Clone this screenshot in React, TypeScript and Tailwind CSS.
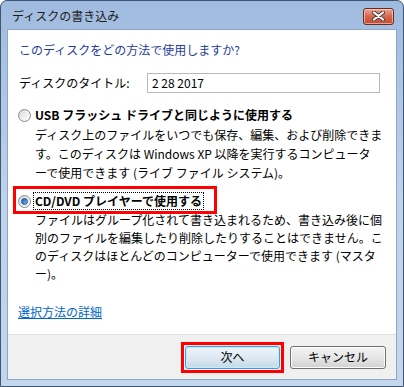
import React from 'react';

const font = "font-['Noto_Sans_CJK_JP','Noto_Sans',sans-serif]";

const Radio: React.FC<{ checked?: boolean }> = ({ checked }) => (
  <div className="w-[13px] h-[13px] shrink-0 rounded-full border border-[#8a8a8a] bg-linear-to-br from-[#d4d4d4] via-[#eeeeee] to-[#ffffff] flex items-center justify-center">
    {checked && (
      <div className="w-[7px] h-[7px] rounded-full border border-[#1b4f8c] bg-linear-to-br from-[#1d5ea8] via-[#3d8ee0] to-[#8ccaf5]" />
    )}
  </div>
);

const CloseButton: React.FC = () => (
  <div className="w-[31px] h-[17px] rounded-[3px] border border-[#6b2a1e] bg-linear-to-b from-[#e8a597] via-[#d4664f] to-[#c44a32] flex items-center justify-center shadow-[inset_0_0_0_1px_rgba(255,220,210,0.6)]">
    <svg width="13" height="10" viewBox="0 0 13 10">
      <path d="M2 1.5 L11 8.5 M11 1.5 L2 8.5" stroke="#4a3a36" strokeWidth="4" strokeLinecap="round" />
      <path d="M2 1.5 L11 8.5 M11 1.5 L2 8.5" stroke="#ffffff" strokeWidth="2.2" strokeLinecap="round" />
    </svg>
  </div>
);

export default function App() {
  return (
    <div className={`w-[404px] h-[387px] bg-white ${font} text-[12px] text-black`}>
      <div className="w-full h-full rounded-t-[7px] border border-[#3f5571] bg-linear-to-b from-[#9fbbdf] via-[#bdd2eb] to-[#c2d6ed] flex flex-col">
        {/* title bar */}
        <div className="h-[28px] shrink-0 flex items-center justify-between pl-[11px] pr-[9px] pt-[2px]">
          <span className="text-[12px] text-[#1b1b1b] leading-[16px]">ディスクの書き込み</span>
          <CloseButton />
        </div>

        {/* body */}
        <div className="flex-1 mx-[6px] mb-[6px] border border-[#8fa7c3] flex flex-col">
          <div className="flex-1 bg-white flex flex-col">
            <p className="pt-[11px] pl-[11px] leading-[18px] text-[#1e3c9a]">このディスクをどの方法で使用しますか?</p>

            <div className="mt-[14px] pl-[11px] h-[20px] flex items-center">
              <span className="w-[128px] leading-[18px]">ディスクのタイトル:</span>
              <div className="w-[233px] h-[20px] border border-[#b5b8be] flex items-center px-[4px] leading-[18px]">2 28 2017</div>
            </div>

            <div className="mt-[13px] pl-[10px] h-[18px] flex items-center gap-[2px]">
              <Radio />
              <span className="border border-transparent px-[1px] font-bold leading-[16px]">USB フラッシュ ドライブと同じように使用する</span>
            </div>
            <div className="mt-[1px] pl-[27px] leading-[19px] whitespace-nowrap">
              <div>ディスク上のファイルをいつでも保存、編集、および削除できま</div>
              <div>す。このディスクは Windows XP 以降を実行するコンピュータ</div>
              <div>ーで使用できます (ライブ ファイル システム)。</div>
            </div>

            <div className="mt-[10px] pl-[10px] h-[18px] flex items-center gap-[2px] relative">
              <div className="absolute left-[5px] -top-[6px] w-[204px] h-[28px] border-[3px] border-[#ff0000]" />
              <Radio checked />
              <span className="border border-dotted border-black px-[1px] font-bold leading-[16px]">CD/DVD プレイヤーで使用する</span>
            </div>
            <div className="mt-[1px] pl-[27px] leading-[18px] whitespace-nowrap">
              <div>ファイルはグループ化されて書き込まれるため、書き込み後に個</div>
              <div>別のファイルを編集したり削除したりすることはできません。こ</div>
              <div>のディスクはほとんどのコンピューターで使用できます (マスタ</div>
              <div>ー)。</div>
            </div>

            <a className="mt-[20px] ml-[10px] self-start leading-[18px] text-[#0066cc] underline">選択方法の詳細</a>
          </div>

          {/* footer */}
          <div className="h-[45px] shrink-0 border-t border-[#dfdfdf] bg-[#f0f0f0] flex items-center justify-end gap-[10px] pr-[10px]">
            <div className="relative">
              <div className="absolute -inset-[4px] border-[3px] border-[#ff0000]" />
              <button className="w-[95px] h-[23px] rounded-[3px] border border-[#3c9fd6] bg-linear-to-b from-[#eef5fb] via-[#dde9f3] to-[#c5d9e8] shadow-[inset_0_0_0_1px_#c8eafa] leading-[16px]">次へ</button>
            </div>
            <button className="w-[96px] h-[23px] rounded-[3px] border border-[#707070] bg-linear-to-b from-[#f3f3f3] via-[#e6e6e6] to-[#d2d2d2] shadow-[inset_0_0_0_1px_#fbfbfb] leading-[16px]">キャンセル</button>
          </div>
        </div>
      </div>
    </div>
  );
}
